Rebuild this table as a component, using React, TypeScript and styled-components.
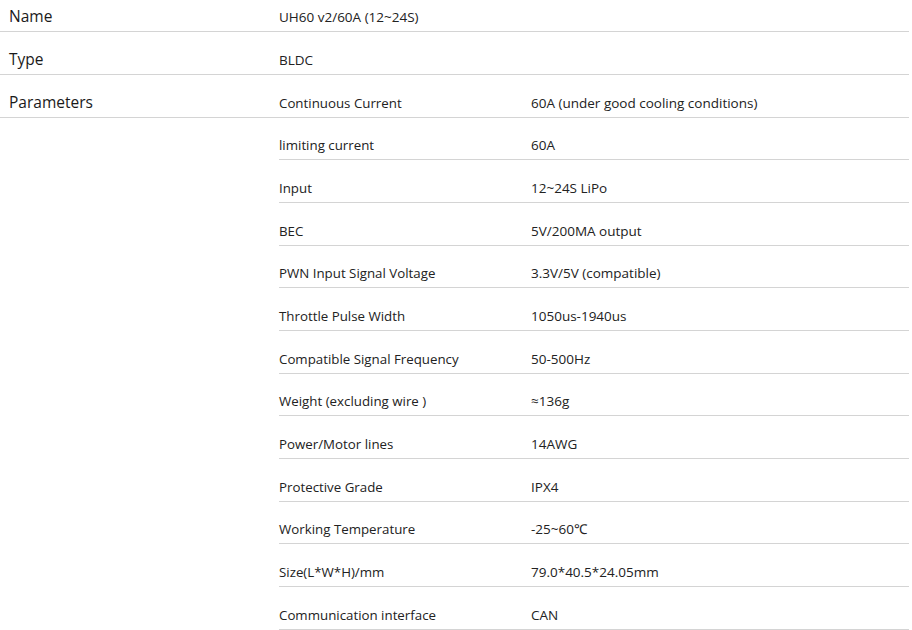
import React from "react";
import styled, { createGlobalStyle } from "styled-components";

const Global = createGlobalStyle`
  html, body { margin: 0; padding: 0; background: #fff; }
  body { font-family: "Open Sans", "Noto Sans", sans-serif; color: #222; }
`;

const Table = styled.div`
  width: 909px;
  display: flex;
  flex-direction: column;
`;

const Row = styled.div<{ $h?: number }>`
  display: flex;
  height: ${(p) => p.$h ?? 42.667}px;
  box-sizing: border-box;
  border-bottom: 1px solid #d4d4d4;
  align-items: flex-end;
`;

const Label = styled.div`
  width: 279px;
  box-sizing: border-box;
  padding: 0 0 4px 9px;
  font-size: 15.5px;
  line-height: 21px;
  color: #1a1a1a;
  flex: none;
`;

const Value = styled.div`
  flex: 1;
  padding-bottom: 5px;
  font-size: 13.5px;
  line-height: 18px;
  color: #222;
`;

const Section = styled.div`
  display: flex;
  align-items: flex-start;
`;

const SectionLabel = styled(Label)`
  height: 42.667px;
  border-bottom: 1px solid #d4d4d4;
  display: flex;
  align-items: flex-end;
`;

const Inner = styled.div`
  flex: 1;
  display: flex;
  flex-direction: column;
`;

const InnerRow = styled.div`
  display: flex;
  align-items: flex-end;
  height: 42.667px;
  box-sizing: border-box;
  border-bottom: 1px solid #d4d4d4;
`;

const Key = styled.div`
  width: 252px;
  flex: none;
  padding-bottom: 5px;
  font-size: 13.3px;
  line-height: 18px;
`;

const params: [string, string][] = [
  ["Continuous Current", "60A (under good cooling conditions)"],
  ["limiting current", "60A"],
  ["Input", "12~24S LiPo"],
  ["BEC", "5V/200MA output"],
  ["PWN Input Signal Voltage", "3.3V/5V (compatible)"],
  ["Throttle Pulse Width", "1050us-1940us"],
  ["Compatible Signal Frequency", "50-500Hz"],
  ["Weight (excluding wire )", "≈136g"],
  ["Power/Motor lines", "14AWG"],
  ["Protective Grade", "IPX4"],
  ["Working Temperature", "-25~60℃"],
  ["Size(L*W*H)/mm", "79.0*40.5*24.05mm"],
  ["Communication interface", "CAN"],
];

export default function App() {
  return (
    <>
      <Global />
      <Table>
        <Row $h={32}>
          <Label>Name</Label>
          <Value>UH60 v2/60A (12~24S)</Value>
        </Row>
        <Row $h={43}>
          <Label>Type</Label>
          <Value>BLDC</Value>
        </Row>
        <Section>
          <SectionLabel>Parameters</SectionLabel>
          <Inner>
            {params.map(([k, v]) => (
              <InnerRow key={k}>
                <Key>{k}</Key>
                <Value>{v}</Value>
              </InnerRow>
            ))}
          </Inner>
        </Section>
      </Table>
    </>
  );
}
